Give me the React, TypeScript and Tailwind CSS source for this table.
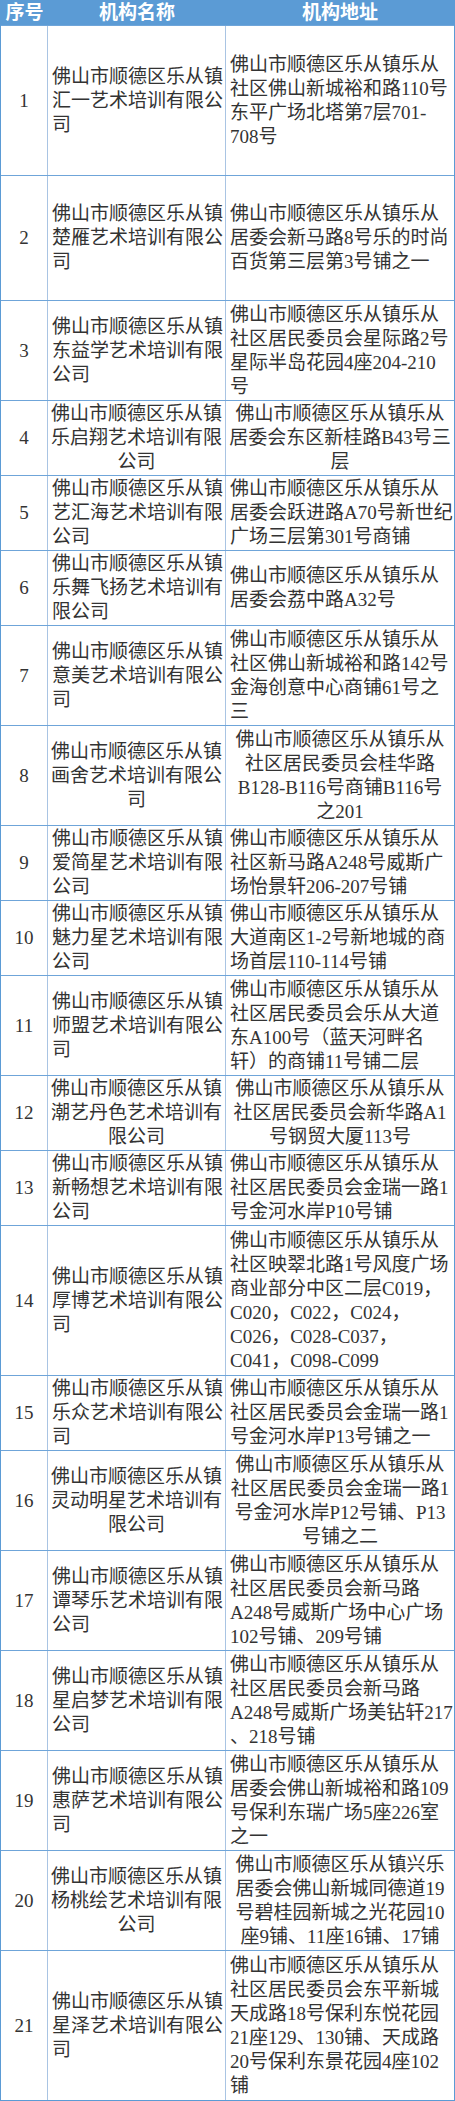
import React from 'react';

type Row = {
  h: number;
  center?: boolean;
  name: string[];
  addr: string[];
};

const rows: Row[] = [
  {
    h: 150,
    name: ['佛山市顺德区乐从镇', '汇一艺术培训有限公', '司'],
    addr: ['佛山市顺德区乐从镇乐从', '社区佛山新城裕和路110号', '东平广场北塔第7层701-', '708号'],
  },
  {
    h: 125,
    name: ['佛山市顺德区乐从镇', '楚雁艺术培训有限公', '司'],
    addr: ['佛山市顺德区乐从镇乐从', '居委会新马路8号乐的时尚', '百货第三层第3号铺之一'],
  },
  {
    h: 100,
    name: ['佛山市顺德区乐从镇', '东益学艺术培训有限', '公司'],
    addr: ['佛山市顺德区乐从镇乐从', '社区居民委员会星际路2号', '星际半岛花园4座204-210', '号'],
  },
  {
    h: 75,
    center: true,
    name: ['佛山市顺德区乐从镇', '乐启翔艺术培训有限', '公司'],
    addr: ['佛山市顺德区乐从镇乐从', '居委会东区新桂路B43号三', '层'],
  },
  {
    h: 75,
    name: ['佛山市顺德区乐从镇', '艺汇海艺术培训有限', '公司'],
    addr: ['佛山市顺德区乐从镇乐从', '居委会跃进路A70号新世纪', '广场三层第301号商铺'],
  },
  {
    h: 75,
    name: ['佛山市顺德区乐从镇', '乐舞飞扬艺术培训有', '限公司'],
    addr: ['佛山市顺德区乐从镇乐从', '居委会荔中路A32号'],
  },
  {
    h: 100,
    name: ['佛山市顺德区乐从镇', '意美艺术培训有限公', '司'],
    addr: ['佛山市顺德区乐从镇乐从', '社区佛山新城裕和路142号', '金海创意中心商铺61号之', '三'],
  },
  {
    h: 100,
    center: true,
    name: ['佛山市顺德区乐从镇', '画舍艺术培训有限公', '司'],
    addr: ['佛山市顺德区乐从镇乐从', '社区居民委员会桂华路', 'B128-B116号商铺B116号', '之201'],
  },
  {
    h: 75,
    name: ['佛山市顺德区乐从镇', '爱简星艺术培训有限', '公司'],
    addr: ['佛山市顺德区乐从镇乐从', '社区新马路A248号威斯广', '场怡景轩206-207号铺'],
  },
  {
    h: 75,
    name: ['佛山市顺德区乐从镇', '魅力星艺术培训有限', '公司'],
    addr: ['佛山市顺德区乐从镇乐从', '大道南区1-2号新地城的商', '场首层110-114号铺'],
  },
  {
    h: 100,
    name: ['佛山市顺德区乐从镇', '师盟艺术培训有限公', '司'],
    addr: ['佛山市顺德区乐从镇乐从', '社区居民委员会乐从大道', '东A100号（蓝天河畔名', '轩）的商铺11号铺二层'],
  },
  {
    h: 75,
    center: true,
    name: ['佛山市顺德区乐从镇', '潮艺丹色艺术培训有', '限公司'],
    addr: ['佛山市顺德区乐从镇乐从', '社区居民委员会新华路A1', '号钢贸大厦113号'],
  },
  {
    h: 75,
    name: ['佛山市顺德区乐从镇', '新畅想艺术培训有限', '公司'],
    addr: ['佛山市顺德区乐从镇乐从', '社区居民委员会金瑞一路1', '号金河水岸P10号铺'],
  },
  {
    h: 150,
    name: ['佛山市顺德区乐从镇', '厚博艺术培训有限公', '司'],
    addr: [
      '佛山市顺德区乐从镇乐从',
      '社区映翠北路1号风度广场',
      '商业部分中区二层C019，',
      'C020，C022，C024，',
      'C026，C028-C037，',
      'C041，C098-C099',
    ],
  },
  {
    h: 75,
    name: ['佛山市顺德区乐从镇', '乐众艺术培训有限公', '司'],
    addr: ['佛山市顺德区乐从镇乐从', '社区居民委员会金瑞一路1', '号金河水岸P13号铺之一'],
  },
  {
    h: 100,
    center: true,
    name: ['佛山市顺德区乐从镇', '灵动明星艺术培训有', '限公司'],
    addr: ['佛山市顺德区乐从镇乐从', '社区居民委员会金瑞一路1', '号金河水岸P12号铺、P13', '号铺之二'],
  },
  {
    h: 100,
    name: ['佛山市顺德区乐从镇', '谭琴乐艺术培训有限', '公司'],
    addr: ['佛山市顺德区乐从镇乐从', '社区居民委员会新马路', 'A248号威斯广场中心广场', '102号铺、209号铺'],
  },
  {
    h: 100,
    name: ['佛山市顺德区乐从镇', '星启梦艺术培训有限', '公司'],
    addr: ['佛山市顺德区乐从镇乐从', '社区居民委员会新马路', 'A248号威斯广场美钻轩217', '、218号铺'],
  },
  {
    h: 100,
    name: ['佛山市顺德区乐从镇', '惠萨艺术培训有限公', '司'],
    addr: ['佛山市顺德区乐从镇乐从', '居委会佛山新城裕和路109', '号保利东瑞广场5座226室', '之一'],
  },
  {
    h: 100,
    center: true,
    name: ['佛山市顺德区乐从镇', '杨桃绘艺术培训有限', '公司'],
    addr: ['佛山市顺德区乐从镇兴乐', '居委会佛山新城同德道19', '号碧桂园新城之光花园10', '座9铺、11座16铺、17铺'],
  },
  {
    h: 150,
    name: ['佛山市顺德区乐从镇', '星泽艺术培训有限公', '司'],
    addr: [
      '佛山市顺德区乐从镇乐从',
      '社区居民委员会东平新城',
      '天成路18号保利东悦花园',
      '21座129、130铺、天成路',
      '20号保利东景花园4座102',
      '铺',
    ],
  },
];

const Lines: React.FC<{ lines: string[]; center?: boolean }> = ({ lines, center }) => (
  <div className={`flex flex-col ${center ? 'items-center' : 'items-start'}`}>
    {lines.map((l, i) => (
      <span key={i} className="whitespace-nowrap">
        {l}
      </span>
    ))}
  </div>
);

export default function App() {
  return (
    <div className="w-[455px] bg-white font-['Liberation_Serif','Noto_Sans_CJK_SC',serif] text-[19px] leading-[24px] text-[#333]">
      <div className="border-x border-b border-[#5b9bd5]">
        <div className="flex h-[25px] bg-[#5b9bd5] font-bold text-white leading-[25px]">
          <div className="w-[47px] text-center">序号</div>
          <div className="w-[178px] text-center">机构名称</div>
          <div className="flex-1 text-center">机构地址</div>
        </div>
        {rows.map((r, i) => (
          <div
            key={i}
            className="flex border-t border-[#6fa5d9]"
            style={{ height: r.h }}
          >
            <div className="flex w-[47px] items-center justify-center border-r border-[#a9c4e3]">
              {i + 1}
            </div>
            <div
              className={`flex w-[178px] flex-col justify-center border-r border-[#a9c4e3] ${
                r.center ? 'items-center' : 'items-start pl-[4px]'
              }`}
            >
              <Lines lines={r.name} center={r.center} />
            </div>
            <div
              className={`flex flex-1 flex-col justify-center ${
                r.center ? 'items-center' : 'items-start pl-[4px]'
              }`}
            >
              <Lines lines={r.addr} center={r.center} />
            </div>
          </div>
        ))}
      </div>
    </div>
  );
}
